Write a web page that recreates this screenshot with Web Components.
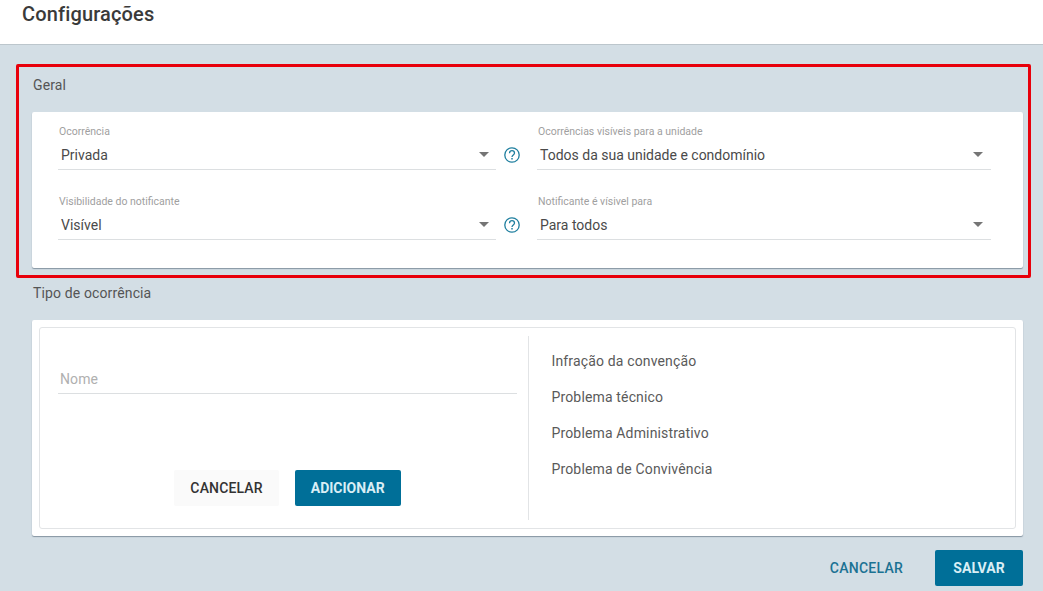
<!DOCTYPE html>
<html lang="pt">
<head>
<meta charset="utf-8">
<title>Configurações</title>
<style>
  html, body { margin: 0; height: 591px; overflow: hidden; background: #d3dee5; }
  body { font-family: Roboto, "Liberation Sans", sans-serif; color: #444; -webkit-font-smoothing: antialiased; }
  .fields { display: grid; grid-template-columns: 438px 41px 454px; row-gap: 24px; padding: 12px 32px 28px 26px; }
  .footer { display: flex; justify-content: flex-end; align-items: center; gap: 32px; margin-top: 14px; padding-right: 20px; }
</style>
</head>
<body>

<app-header>Configurações</app-header>

<red-frame>
  <app-section heading="Geral">
    <app-card>
      <div class="fields">
        <select-field label="Ocorrência" value="Privada"></select-field>
        <help-icon></help-icon>
        <select-field style="--arrow-gap: 8px" label="Ocorrências visíveis para a unidade" value="Todos da sua unidade e condomínio"></select-field>
        <select-field label="Visibilidade do notificante" value="Visível"></select-field>
        <help-icon></help-icon>
        <select-field style="--arrow-gap: 8px" label="Notificante é vísivel para" value="Para todos"></select-field>
      </div>
    </app-card>
  </app-section>
</red-frame>

<app-section heading="Tipo de ocorrência" class="second">
  <app-card>
    <type-panel>
      <text-field slot="form" placeholder="Nome"></text-field>
      <app-button slot="actions" kind="light">CANCELAR</app-button>
      <app-button slot="actions" kind="primary">ADICIONAR</app-button>
      <type-item>Infração da convenção</type-item>
      <type-item>Problema técnico</type-item>
      <type-item>Problema Administrativo</type-item>
      <type-item>Problema de Convivência</type-item>
    </type-panel>
  </app-card>
</app-section>

<div class="footer">
  <app-button kind="link">CANCELAR</app-button>
  <app-button kind="primary" wide>SALVAR</app-button>
</div>

<template id="header-tpl">
  <style>
    :host { display: block; height: 44px; background: #fff; border-bottom: 1px solid #bcc6cc; box-sizing: content-box; }
    h1 { margin: 0; padding-left: 22px; font-size: 20px; font-weight: 500; line-height: 28px; color: #3a3a3a; letter-spacing: .15px; }
  </style>
  <h1><slot></slot></h1>
</template>

<template id="frame-tpl">
  <style>
    :host { display: block; position: relative; }
    .mark { position: absolute; left: 16px; top: 19px; width: 1015px; height: 214px; box-sizing: border-box; border: 3px solid #e8000b; border-radius: 2px; pointer-events: none; }
  </style>
  <slot></slot>
  <div class="mark"></div>
</template>

<template id="section-tpl">
  <style>
    :host { display: block; padding: 0 20px 0 32px; }
    h2 { margin: 0; padding: 30px 0 17px 1px; font-size: 14px; font-weight: 400; line-height: 20px; color: #555; letter-spacing: .13px; }
    :host(.second) h2 { padding-top: 15px; }
  </style>
  <h2 id="t"></h2>
  <slot></slot>
</template>

<template id="card-tpl">
  <style>
    :host { display: block; background: #fff; border-radius: 2px; box-shadow: 0 1px 1px rgba(70,90,105,.55); }
  </style>
  <slot></slot>
</template>

<template id="select-tpl">
  <style>
    :host { display: block; }
    .label { font-size: 10.5px; line-height: 16px; color: #a0a0a0; padding-left: 1px; }
    .box { display: flex; align-items: center; justify-content: space-between; height: 29px; padding: 0 var(--arrow-gap, 7px) 0 3px; border-bottom: 1px solid #dcdfe1; font-size: 14px; color: #4a4a4a; }
    .arrow { width: 0; height: 0; border-left: 5px solid transparent; border-right: 5px solid transparent; border-top: 5px solid #757575; }
  </style>
  <div class="label" id="l"></div>
  <div class="box"><span id="v"></span><span class="arrow"></span></div>
</template>

<template id="help-tpl">
  <style>
    :host { display: flex; align-items: flex-start; justify-content: center; padding-top: 23px; padding-right: 9px; }
    svg { display: block; width: 16px; height: 16px; }
  </style>
  <svg viewBox="0 0 16 16" fill="none" stroke="#1f7f9f" stroke-width="1.3">
    <circle cx="8" cy="8" r="7.2"/>
    <path d="M5.5 6.2C5.5 4.6 6.6 3.6 8 3.6s2.5 1 2.5 2.4c0 1.9-2.5 2-2.5 4"/>
    <path d="M8 11.1v1.5" stroke-width="1.5"/>
  </svg>
</template>

<template id="panel-tpl">
  <style>
    :host { display: block; padding: 7px 7px 7px; }
    .frame { display: grid; grid-template-columns: 488px 1fr; height: 184px; padding: 8px 0; border: 1px solid #e2e4e6; border-radius: 3px; }
    .left { display: flex; flex-direction: column; padding: 28px 11px 14px 18px; }
    .actions { display: flex; justify-content: center; gap: 16px; margin-top: auto; }
    .right { border-left: 1px solid #e2e4e6; padding: 7px 0 0 22.5px; }
  </style>
  <div class="frame">
    <div class="left">
      <slot name="form"></slot>
      <div class="actions"><slot name="actions"></slot></div>
    </div>
    <div class="right"><slot></slot></div>
  </div>
</template>

<template id="text-tpl">
  <style>
    :host { display: block; }
    .box { height: 29px; padding-left: 2px; border-bottom: 1px solid #dcdfe1; font-size: 14px; line-height: 31px; color: #b0b0b0; letter-spacing: .1px; }
  </style>
  <div class="box" id="p"></div>
</template>

<template id="item-tpl">
  <style>
    :host { display: block; font-size: 14px; line-height: 36px; color: #5a5a5a; letter-spacing: .15px; }
  </style>
  <slot></slot>
</template>

<template id="button-tpl">
  <style>
    :host { display: inline-flex; align-items: center; justify-content: center; height: 36px; padding: 0 16px; box-sizing: border-box; border-radius: 2px; font-size: 14px; font-weight: 500; letter-spacing: .25px; }
    :host([kind="primary"]) { background: #006f98; color: #d9eef5; font-weight: 700; letter-spacing: 0; }
    :host([kind="light"]) { background: #fafafa; color: #333; min-width: 104px; letter-spacing: .15px; }
    :host([kind="link"]) { padding: 0; color: #1b7293; }
    :host([wide]) { width: 88px; }
  </style>
  <slot></slot>
</template>

<script>
  function shadow(el, id) {
    const root = el.attachShadow({ mode: 'open' });
    root.appendChild(document.getElementById(id).content.cloneNode(true));
    return root;
  }

  // elements that only wrap a slot
  const simple = {
    'app-header': 'header-tpl',
    'red-frame': 'frame-tpl',
    'app-card': 'card-tpl',
    'help-icon': 'help-tpl',
    'type-panel': 'panel-tpl',
    'type-item': 'item-tpl',
    'app-button': 'button-tpl'
  };
  Object.keys(simple).forEach(name => {
    customElements.define(name, class extends HTMLElement {
      constructor() { super(); shadow(this, simple[name]); }
    });
  });

  class AppSection extends HTMLElement {
    connectedCallback() {
      const root = shadow(this, 'section-tpl');
      root.getElementById('t').textContent = this.getAttribute('heading');
    }
  }
  customElements.define('app-section', AppSection);

  class SelectField extends HTMLElement {
    connectedCallback() {
      const root = shadow(this, 'select-tpl');
      root.getElementById('l').textContent = this.getAttribute('label');
      root.getElementById('v').textContent = this.getAttribute('value');
    }
  }
  customElements.define('select-field', SelectField);

  class TextField extends HTMLElement {
    connectedCallback() {
      const root = shadow(this, 'text-tpl');
      root.getElementById('p').textContent = this.getAttribute('placeholder');
    }
  }
  customElements.define('text-field', TextField);
</script>
</body>
</html>
